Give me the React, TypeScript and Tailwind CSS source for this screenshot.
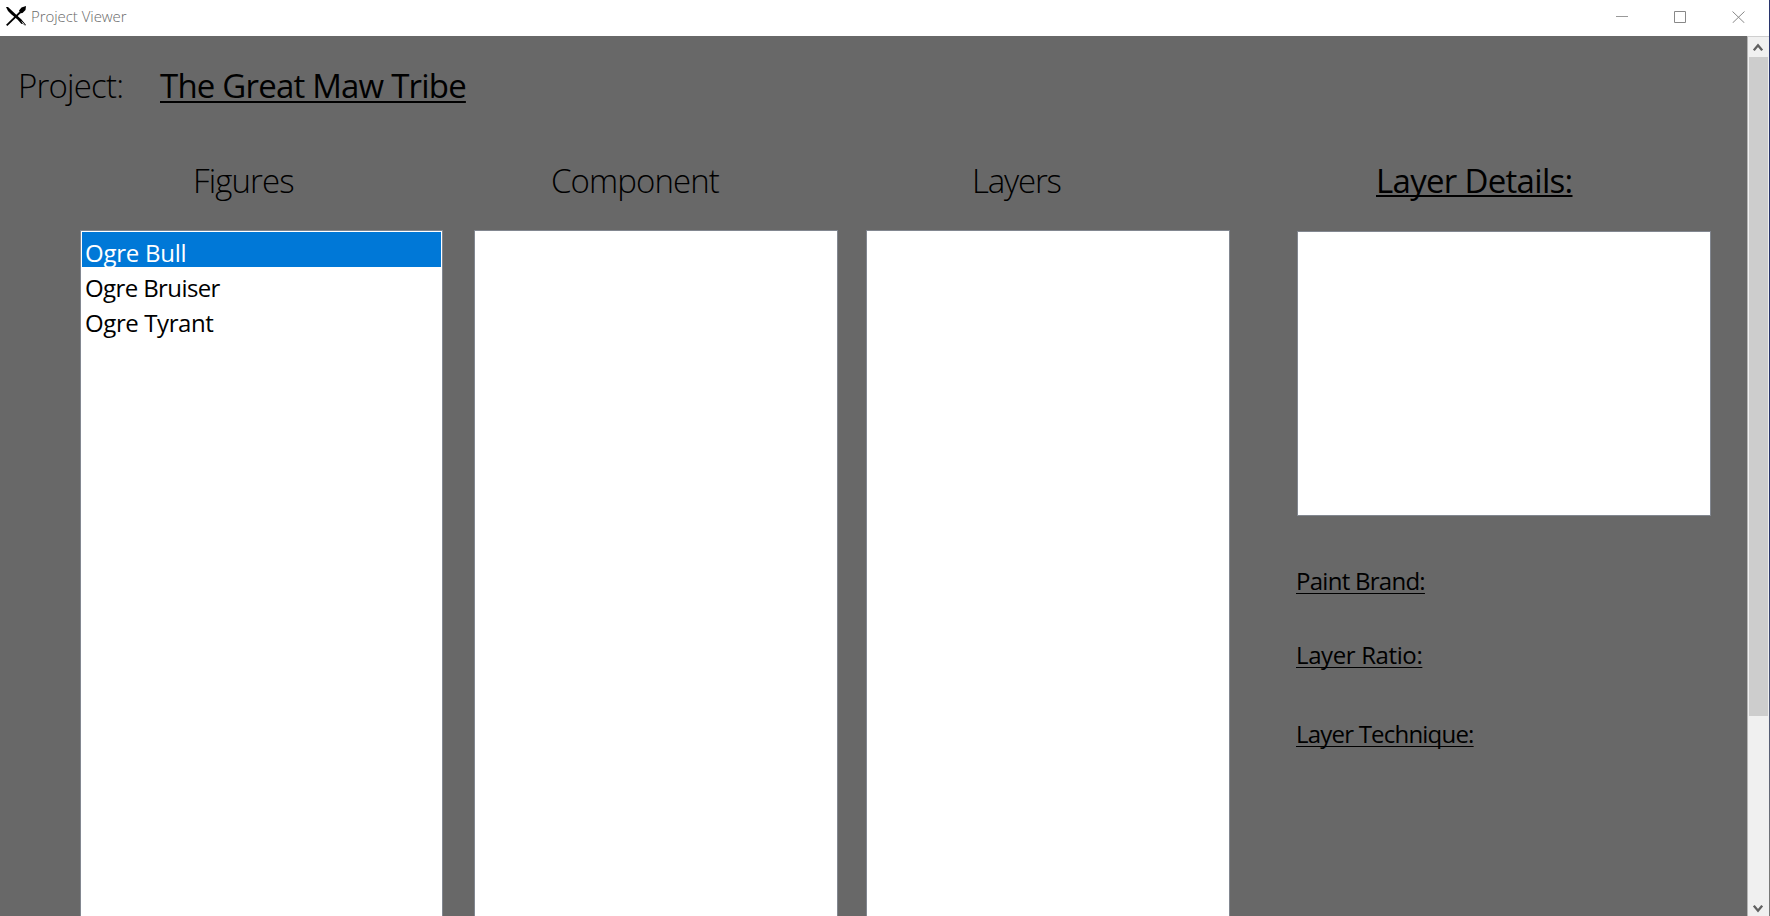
type Item = { name: string; tracking: string; selected?: boolean };

const figures: Item[] = [
  { name: "Ogre Bull", tracking: "tracking-[-0.25px]", selected: true },
  { name: "Ogre Bruiser", tracking: "tracking-[-0.6px]" },
  { name: "Ogre Tyrant", tracking: "tracking-[-0.4px]" },
];

function AppIcon() {
  return (
    <svg width="20" height="20" viewBox="0 0 20 20" fill="#000" className="shrink-0">
      <path d="M0 1h2l8.5 8 5 4.5L20 19l-1 .5-2.500-2-1 .5-4-4.500L5.500 8.500 2 5z" />
      <path d="M15.500 15.500l3 3M16.800 14.500l1 1" stroke="#fff" strokeWidth=".7" />
      <path d="M13 4.500l2.500-3L20 0l-.5 4-3 3-2 .2z" />
      <path d="M14.500 6L.7 19.300" stroke="#000" strokeWidth="1.800" fill="none" />
    </svg>
  );
}

function TitleBar() {
  return (
    <header className="flex h-9 shrink-0 items-start bg-white pl-1.5">
      <div className="flex flex-1 items-start gap-[5px] pt-1.5">
        <AppIcon />
        <span className="text-[15px] leading-[21px] font-light tracking-[-0.05px] whitespace-nowrap text-[#6a6a6a]">
          Project Viewer
        </span>
      </div>
      <div className="flex gap-[46px] pt-[11px] pr-6">
        <svg width="12" height="12" viewBox="0 0 12 12" fill="none" stroke="#999">
          <path d="M0 5.500h12" />
        </svg>
        <svg width="12" height="12" viewBox="0 0 12 12" fill="none" stroke="#888">
          <path d="M.5.5h11v11H.5z" />
        </svg>
        <svg width="13" height="12" viewBox="0 0 13 12" fill="none" stroke="#888">
          <path d="M.5.500l12 11.500M12.500.500L.5 12" />
        </svg>
      </div>
    </header>
  );
}

function ListBox({ items = [] }: { items?: Item[] }) {
  return (
    <ul className="min-h-0 flex-1 border border-b-0 border-[#828790] bg-white p-px text-2xl">
      {items.map((item) => (
        <li
          key={item.name}
          className={`h-[35px] pl-[3px] leading-[41px] whitespace-nowrap ${item.tracking} ${
            item.selected ? "bg-[#0078d7] text-white" : "text-black"
          }`}
        >
          {item.name}
        </li>
      ))}
    </ul>
  );
}

function Heading({ children, className }: { children: string; className: string }) {
  return (
    <h2 className={`mb-[27px] h-12 text-[33px] leading-[52px] font-light whitespace-nowrap text-black ${className}`}>
      {children}
    </h2>
  );
}

function ScrollBar() {
  return (
    <div className="flex w-[22px] shrink-0 flex-col border-t border-l border-t-[#cfcfcf] border-l-[#b4b4b4] bg-[#f0f0f0] pl-px">
      <div className="flex h-5 justify-center pt-1.5 pr-0.5">
        <svg width="10" height="9" viewBox="0 0 10 9" fill="none" stroke="#606060" strokeWidth="2.400">
          <path d="M.8 7.300L5 2.300l4.200 5" />
        </svg>
      </div>
      <div className="mr-px h-[659px] w-[19px] bg-[#cdcdcd]" />
      <div className="flex flex-1 items-end justify-center pr-0.5 pb-[3px]">
        <svg width="10" height="9" viewBox="0 0 10 9" fill="none" stroke="#606060" strokeWidth="2.400">
          <path d="M.8 1.700L5 6.700l4.200-5" />
        </svg>
      </div>
    </div>
  );
}

export default function App() {
  return (
    <div className="flex h-[916px] w-[1770px] overflow-hidden bg-[#686868] font-['Open_Sans','Noto_Sans',sans-serif] text-black">
      <div className="flex w-[1769px] flex-col">
        <TitleBar />
        <div className="flex min-h-0 flex-1">
          <main className="flex w-[1747px] flex-col">
            <div className="mt-6 mb-[47px] flex h-12 pl-[18px] text-[33px] leading-[52px] whitespace-nowrap">
              <span className="w-[142px] font-light tracking-[-0.8px]">Project:</span>
              <h1 className="tracking-[-0.8px] underline decoration-2 underline-offset-[3px] [text-decoration-skip-ink:none]">
                The Great Maw Tribe
              </h1>
            </div>
            <div className="flex min-h-0 flex-1 pl-20">
              <section className="mr-[31px] flex w-[363px] flex-col">
                <Heading className="pl-[113px] tracking-[-0.9px]">Figures</Heading>
                <ListBox items={figures} />
              </section>
              <section className="mr-7 flex w-[364px] flex-col">
                <Heading className="pl-[77px] tracking-[-0.9px]">Component</Heading>
                <ListBox />
              </section>
              <section className="mr-[67px] flex w-[364px] flex-col">
                <Heading className="pl-[106px] tracking-[-1.2px]">Layers</Heading>
                <ListBox />
              </section>
              <section className="flex w-[414px] flex-col">
                <h2 className="mb-7 h-12 pl-[79px] text-[33px] leading-[52px] tracking-[-0.7px] whitespace-nowrap underline decoration-2 underline-offset-[2px] [text-decoration-skip-ink:none]">
                  Layer Details:
                </h2>
                <div className="h-[285px] border border-[#828790] bg-white" />
                <div className="-ml-[1px] flex flex-col items-start pt-[47px] text-2xl leading-9 whitespace-nowrap underline decoration-1 underline-offset-[3px] [text-decoration-skip-ink:none]">
                  <span className="mb-[38px] tracking-[-0.73px]">Paint Brand:</span>
                  <span className="mb-[43px] tracking-[-0.38px]">Layer Ratio:</span>
                  <span className="tracking-[-0.79px]">Layer Technique:</span>
                </div>
              </section>
            </div>
          </main>
          <ScrollBar />
        </div>
      </div>
      <div className="w-px bg-linear-to-b from-[#28346c] from-60% to-[#777] to-95%" />
    </div>
  );
}
